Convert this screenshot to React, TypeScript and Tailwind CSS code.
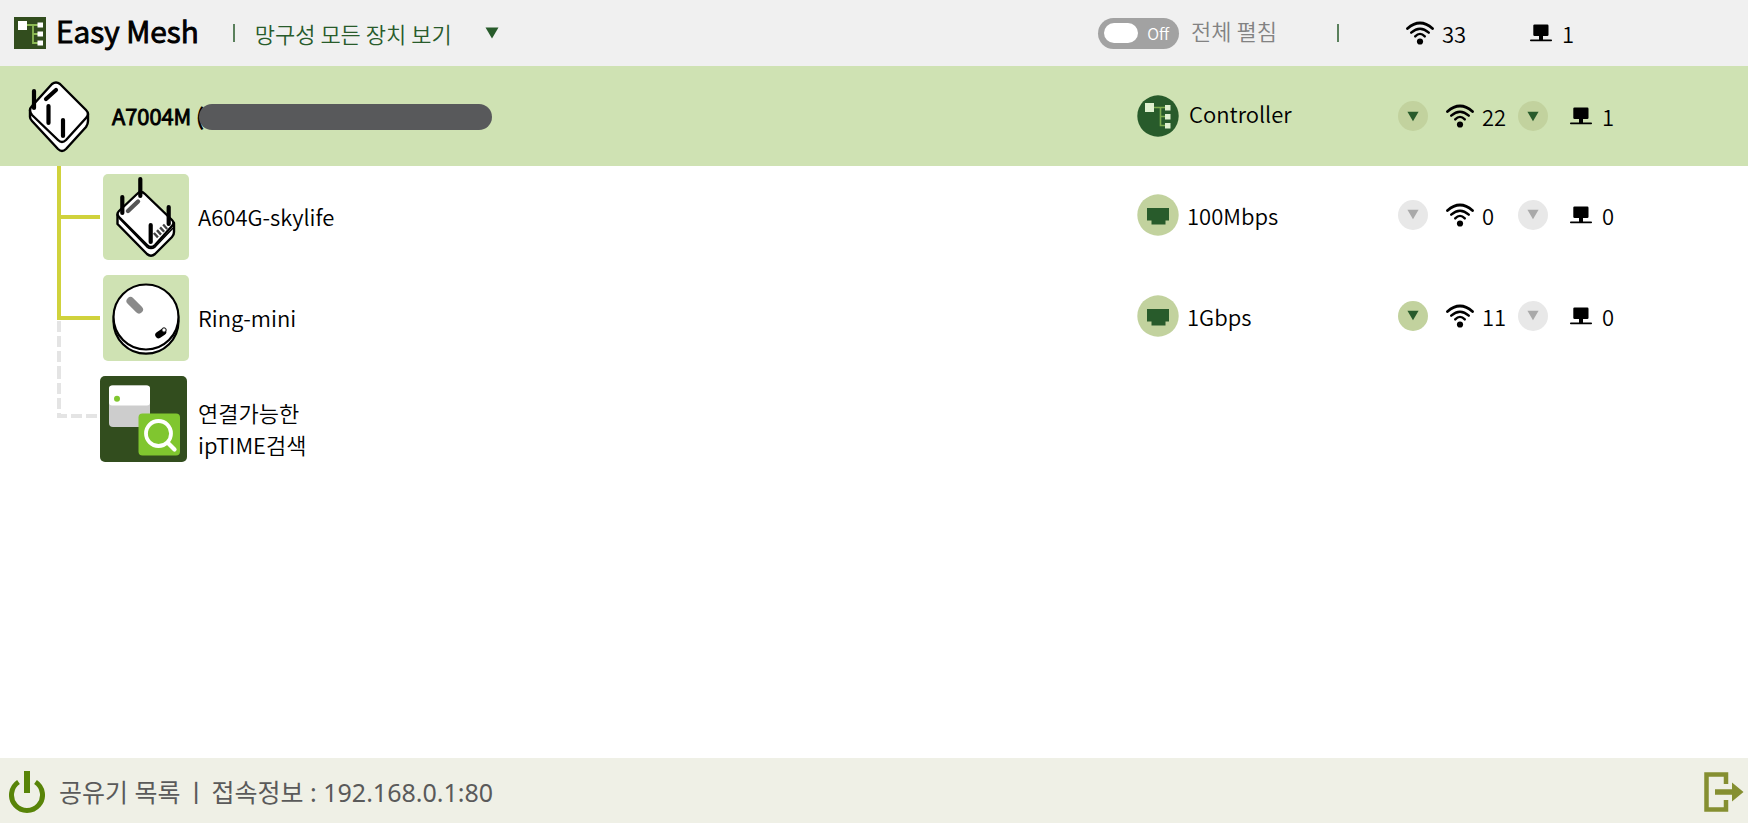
import React, { useState } from 'react';

interface Device {
    name: string;
    link: string;
    wifi: number;
    wired: number;
    icon: React.ReactNode;
}

const LogoIcon: React.FC = () => (
    <svg viewBox="0 0 32 32" className="size-8 shrink-0" aria-hidden="true">
        <rect width="32" height="32" fill="#324d1e" />
        <path d="M13 8h11M19 8v18h5M19 17h5" fill="none" stroke="#8cba54" strokeWidth="1.8" />
        <path d="M4 4h9v9H4zM23.5 5.5h5.5v5h-5.5zM23.5 14.5h5.5v5h-5.5zM23.5 23.5h5.5v5h-5.5z" fill="#fff" />
    </svg>
);

const ControllerIcon: React.FC = () => (
    <svg viewBox="0 0 42 42" className="size-[42px] shrink-0" aria-hidden="true">
        <circle cx="21" cy="21" r="20.7" fill="#285b2b" />
        <path d="M17 12.5h11M23.5 12.5v18h5M23.5 21.5h5" fill="none" stroke="#7fae50" strokeWidth="1.6" />
        <path d="M8 8h9v9H8zM28 10h5.5v5.5H28zM28 19h5.5v5.5H28zM28 28h5.5v5.5H28z" fill="#dff0cf" />
    </svg>
);

const PortIcon: React.FC = () => (
    <svg viewBox="0 0 42 42" className="size-[42px] shrink-0" aria-hidden="true">
        <circle cx="21" cy="21" r="20.7" fill="#c2d29e" />
        <path d="M10 14h22v12.5h-3.5v4h-14v-4H10z" fill="#285b2b" />
    </svg>
);

const WifiIcon: React.FC = () => (
    <svg viewBox="0 0 28 24" className="h-6 w-7 shrink-0" aria-hidden="true">
        <g fill="none" stroke="#000" strokeWidth="2.4" strokeLinecap="round">
            <path d="M1.5 7.5Q14 -3.5 26.5 7.5" strokeWidth="2.8" />
            <path d="M5.2 11.7Q14 3.6 22.8 11.7" />
            <path d="M9.2 15.4Q14 10.4 18.8 15.4" />
        </g>
        <circle cx="14" cy="20.5" r="3.1" />
    </svg>
);

const WiredIcon: React.FC = () => (
    <svg viewBox="0 0 22 18" className="h-[18px] w-[22px] shrink-0" aria-hidden="true">
        <rect x="3.3" y="0.5" width="15.2" height="11.5" rx="1.2" />
        <rect x="9" y="11" width="4" height="5" />
        <rect y="15.5" width="22" height="1.8" rx="0.8" />
    </svg>
);

const A7004MIcon: React.FC = () => (
    <svg viewBox="0 0 66 76" className="h-[76px] w-[66px] shrink-0" aria-hidden="true">
        <g fill="#fff" stroke="#000" strokeWidth="2.4" strokeLinejoin="round">
            <path d="M4 31V38Q4 40 6 42L32 70Q36 74 40 70L60 48Q62 45 62 42V35Z" />
            <path d="M26 5Q30 2 34 5L60 31Q64 35 60 39L40 61Q36 65 32 61L6 36Q2 31 6 27Z" />
        </g>
        <path d="M8 12v17M22.5 27v17M37 41v16M20 20L30 11" stroke="#000" strokeWidth="4.2" strokeLinecap="round" />
    </svg>
);

const A604GIcon: React.FC = () => (
    <svg viewBox="0 0 90 86" className="h-[86px] w-[90px] shrink-0" aria-hidden="true">
        <rect x="3" width="86" height="86" rx="5" fill="#cfe2b3" />
        <g fill="#fff" stroke="#000" strokeWidth="2.4" strokeLinejoin="round">
            <path d="M17.5 41V50L47 80Q51 83.5 55 80L72 63Q74 61 74 58V49Z" />
            <path d="M37 20Q41 16 45 20L72 46Q75 49 72 52L55 71Q51 75 47 71L19 43Q16 40 19 37Z" />
        </g>
        <path d="M19 44L47 73Q51 76 55 73L73 54" fill="none" stroke="#000" strokeWidth="1.6" />
        <path d="M28 37L38 27.5" stroke="#555" strokeWidth="4.4" strokeLinecap="round" />
        <path d="M55 62L66 52" stroke="#444" strokeWidth="6" strokeDasharray="2.4 1.8" />
        <path d="M22.3 23v16M40.3 5v17M68.7 33v17M50.7 51v17" stroke="#000" strokeWidth="4.2" strokeLinecap="round" />
    </svg>
);

const RingIcon: React.FC = () => (
    <svg viewBox="0 0 90 86" className="h-[86px] w-[90px] shrink-0" aria-hidden="true">
        <rect x="3" width="86" height="86" rx="5" fill="#cfe2b3" />
        <circle cx="46" cy="46.2" r="32.5" fill="#fff" stroke="#000" strokeWidth="2.2" />
        <circle cx="46" cy="42" r="32.5" fill="#fff" stroke="#000" strokeWidth="2.2" />
        <path d="M30.5 26L39 34.5" stroke="#8a8a8a" strokeWidth="8" strokeLinecap="round" />
        <path d="M58.5 60L63 57" stroke="#000" strokeWidth="6.5" strokeLinecap="round" />
        <circle cx="64" cy="55" r="2.2" fill="#fff" stroke="#000" />
    </svg>
);

const SearchTileIcon: React.FC = () => (
    <svg viewBox="0 0 90 86" className="h-[86px] w-[90px] shrink-0" aria-hidden="true">
        <rect width="87" height="86" rx="5" fill="#324d1e" />
        <rect x="9" y="9.5" width="41" height="41.5" rx="4" fill="#cdcdcd" />
        <rect x="9" y="9.5" width="41" height="20" rx="3" fill="#fff" />
        <circle cx="17" cy="22.7" r="3" fill="#80c62f" />
        <rect x="38.5" y="37.5" width="41.5" height="42" rx="4" fill="#80c62f" />
        <circle cx="58.5" cy="57.5" r="12.5" fill="none" stroke="#fff" strokeWidth="3.8" />
        <path d="M68 67L74.5 73.5" stroke="#fff" strokeWidth="4.2" strokeLinecap="round" />
    </svg>
);

const PowerIcon: React.FC = () => (
    <svg viewBox="0 0 36 42" className="h-[42px] w-9" aria-hidden="true">
        <path d="M9.5 11A15.5 15.5 0 1 0 26.5 11" fill="none" stroke="#588408" strokeWidth="5" />
        <path d="M18 0v22" stroke="#588408" strokeWidth="6" />
    </svg>
);

const ExitIcon: React.FC = () => (
    <svg viewBox="0 0 40 40" className="size-10" aria-hidden="true">
        <path d="M22 12V2.5H2.5v35H22V28" fill="none" stroke="#858f31" strokeWidth="4.5" />
        <path d="M11 17.2h17V10.5L39.5 20L28 29.5v-6.7H11z" fill="#858f31" />
    </svg>
);

const ArrowIcon: React.FC<{ className?: string }> = ({ className }) => (
    <svg viewBox="0 0 14 12" className={className} fill="currentColor" aria-hidden="true">
        <path d="M0.5 0.5h13L7 11.5z" />
    </svg>
);

const ExpandButton: React.FC<{ label: string; tone: string; disabled?: boolean }> = ({ label, tone, disabled }) => (
    <button
        type="button"
        aria-label={label}
        disabled={disabled}
        className={`flex size-[30px] shrink-0 items-center justify-center rounded-full ${tone}`}
    >
        <ArrowIcon className="h-[11px] w-3" />
    </button>
);

const OFF = 'bg-[#e8e8e8] text-[#a9a9a9]';
const ON = 'bg-[#c2d29e] text-[#285b2b]';

const Counters: React.FC<{ wifi: number; wired: number; root?: boolean }> = ({ wifi, wired, root }) => (
    <div className="flex">
        <div className="flex w-[120px] items-center">
            <ExpandButton label="무선 장치 펼침" tone={wifi || root ? ON : OFF} disabled={!wifi} />
            <span className="ml-[18px] flex items-center gap-2"><WifiIcon />{wifi}</span>
        </div>
        <div className="flex items-center">
            <ExpandButton label="유선 장치 펼침" tone={wired || root ? ON : OFF} disabled={!wired} />
            <span className="ml-[22px] flex items-center gap-2.5"><WiredIcon />{wired}</span>
        </div>
    </div>
);

const devices: Device[] = [
    { name: 'A604G-skylife', link: '100Mbps', wifi: 0, wired: 0, icon: <A604GIcon /> },
    { name: 'Ring-mini', link: '1Gbps', wifi: 11, wired: 0, icon: <RingIcon /> },
];

const Branch: React.FC<{ last?: boolean }> = ({ last }) => (
    <svg viewBox="0 0 43 101" className="h-[101px] w-[43px] shrink-0" fill="none" strokeWidth="4" aria-hidden="true">
        {last && <path d="M2 54V101" stroke="#e4e4e4" strokeDasharray="11 4" />}
        <path d={last ? 'M2 0V51H43' : 'M2 0V101M2 51H43'} stroke="#d0d23c" />
    </svg>
);

const App: React.FC = () => {
    const [expanded, setExpanded] = useState(false);

    return (
        <div className="flex min-h-screen flex-col bg-white font-['Noto_Sans_CJK_KR',sans-serif] text-[22px] leading-8 font-[350] text-black">
            <header className="grid h-[66px] grid-cols-[1fr_300px_350px] items-center bg-[#f0f0f0]">
                <div className="flex items-center pl-3.5">
                    <LogoIcon />
                    <h1 className="ml-2.5 pb-1.5 text-[30px] font-[350] whitespace-nowrap [-webkit-text-stroke:1px]">Easy Mesh</h1>
                    <span className="ml-[34px] h-[18px] w-0.5 bg-[#285b2b]/75" />
                    <div className="ml-5 grid w-[244px] items-center text-[#285b2b]">
                        <select aria-label="보기" className="col-start-1 row-start-1 h-10 w-full appearance-none bg-transparent">
                            <option>망구성 모든 장치 보기</option>
                        </select>
                        <ArrowIcon className="pointer-events-none col-start-1 row-start-1 h-3 w-3.5 justify-self-end" />
                    </div>
                </div>
                <div className="flex items-center">
                    <label className="flex items-center gap-3 text-[#828282]">
                        <input type="checkbox" className="sr-only" checked={expanded} onChange={e => setExpanded(e.target.checked)} />
                        <span className="flex h-[31px] w-[81px] items-center justify-between rounded-full bg-[#a2a2a2] px-1.5 text-base text-white">
                            <span className="h-5 w-[34px] rounded-full bg-white" />
                            <span className="pr-1">{expanded ? 'On' : 'Off'}</span>
                        </span>
                        <span className="pb-1.5">전체 펼침</span>
                    </label>
                    <span className="ml-[60px] h-[18px] w-0.5 bg-[#285b2b]/75" />
                </div>
                <div className="flex pl-2">
                    <span className="flex w-[124px] items-center gap-2"><WifiIcon />33</span>
                    <span className="flex items-center gap-2.5"><WiredIcon />1</span>
                </div>
            </header>

            <main className="flex-1">
                <section className="grid h-[100px] grid-cols-[1fr_261px_350px] items-center bg-[#cfe2b3]">
                    <div className="flex items-center pt-0.5 pl-[26px]">
                        <A7004MIcon />
                        <h2 className="ml-5 pb-1 font-[350] whitespace-nowrap [-webkit-text-stroke:1px]">A7004M (</h2>
                        <span className="-ml-1 h-[26px] w-[293px] rounded-full bg-[#58595b]" />
                    </div>
                    <div className="flex items-center gap-2.5"><ControllerIcon /><span className="pb-1.5">Controller</span></div>
                    <Counters wifi={22} wired={1} root />
                </section>

                <ul>
                    {devices.map((device, i) => (
                        <li key={device.name} className="grid grid-cols-[1fr_261px_350px] items-center">
                            <div className="flex items-center pl-[57px]">
                                <Branch last={i === devices.length - 1} />
                                {device.icon}
                                <span className="ml-2 pb-0.5">{device.name}</span>
                            </div>
                            <div className="flex items-center gap-2 pb-1"><PortIcon />{device.link}</div>
                            <div className="pb-1"><Counters wifi={device.wifi} wired={device.wired} /></div>
                        </li>
                    ))}
                    <li className="flex items-center pl-[57px]">
                        <svg viewBox="0 0 43 101" className="h-[101px] w-[43px] shrink-0" fill="none" aria-hidden="true">
                            <path d="M2 0V48H43" stroke="#e4e4e4" strokeWidth="4" strokeDasharray="11 4" />
                        </svg>
                        <button type="button" className="flex items-center gap-2 text-left">
                            <SearchTileIcon />
                            <span className="pt-[18px]">연결가능한<br />ipTIME검색</span>
                        </button>
                    </li>
                </ul>
            </main>

            <footer className="flex h-[65px] items-center justify-between bg-[#eff0e6] pt-0.5 pr-1 pl-[9px] font-['Noto_Sans','Noto_Sans_CJK_KR',sans-serif] text-[25px] font-normal text-[#5a5a5a]">
                <div className="flex items-center gap-3.5">
                    <button type="button" aria-label="전원"><PowerIcon /></button>
                    <p className="flex gap-1">
                        <span>공유기 목록</span>
                        <span>ㅣ</span>
                        <span>접속정보 : 192.168.0.1:80</span>
                    </p>
                </div>
                <button type="button" aria-label="나가기"><ExitIcon /></button>
            </footer>
        </div>
    );
};

export default App;
